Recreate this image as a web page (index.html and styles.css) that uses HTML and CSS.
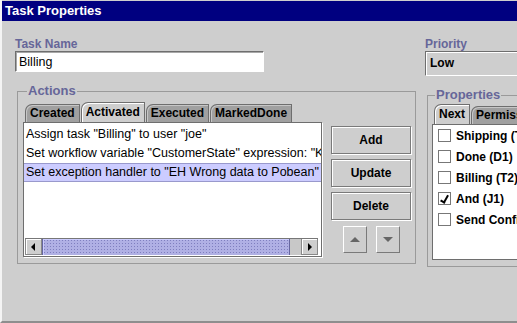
FILE: index.html
```html
<!DOCTYPE html>
<html>
<head>
  <meta name="viewport" content="width=device-width, initial-scale=1.0">
  <title>Task Properties</title>
  <link rel="stylesheet" href="styles.css">
</head>
<body>
  <div class="window">
    <div class="titlebar">Task Properties</div>
    <div class="content">
      <div class="left-column">
        <div class="field">
          <p class="label">Task Name</p>
          <input type="text" class="text-input" value="Billing">
        </div>
        <fieldset class="group actions-group">
          <legend>Actions</legend>
          <div class="actions-body">
            <div class="tab-panel">
              <div class="tabs">
                <div class="tab">Created</div>
                <div class="tab selected">Activated</div>
                <div class="tab">Executed</div>
                <div class="tab">MarkedDone</div>
              </div>
              <div class="list">
                <div class="rows">
                  <div class="row">Assign task "Billing" to user "joe"</div>
                  <div class="row">Set workflow variable "CustomerState" expression: "Known"</div>
                  <div class="row selected">Set exception handler to "EH Wrong data to Pobean"</div>
                </div>
                <div class="hscroll">
                  <div class="arrow-btn left"></div>
                  <div class="thumb"></div>
                  <div class="track"></div>
                  <div class="arrow-btn right"></div>
                </div>
              </div>
            </div>
            <div class="buttons">
              <button>Add</button>
              <button>Update</button>
              <button>Delete</button>
              <div class="move-buttons">
                <div class="move up"></div>
                <div class="move down"></div>
              </div>
            </div>
          </div>
        </fieldset>
      </div>

      <div class="right-column">
        <div class="field">
          <p class="label">Priority</p>
          <div class="combo">Low</div>
        </div>
        <fieldset class="group props-group">
          <legend>Properties</legend>
          <div class="tabs">
            <div class="tab selected">Next</div>
            <div class="tab">Permissions</div>
          </div>
          <div class="list check-list">
            <div class="check-row"><span class="box"></span>Shipping (T3)</div>
            <div class="check-row"><span class="box"></span>Done (D1)</div>
            <div class="check-row"><span class="box"></span>Billing (T2)</div>
            <div class="check-row"><span class="box checked"></span>And (J1)</div>
            <div class="check-row"><span class="box"></span>Send Confirmation (T4)</div>
          </div>
        </fieldset>
      </div>
    </div>
  </div>
</body>
</html>
```

FILE: styles.css
```css
html, body {
  height: 100%;
}

body {
  margin: 0;
  font-family: "Liberation Sans", Arial, sans-serif;
  background-color: #cecece;
  overflow: hidden;
}

.window {
  box-sizing: border-box;
  height: 323px;
  padding-top: 1px;
  border-left: 2px solid #f4f4f4;
  border-bottom: 2px solid #8e8e8e;
  background-color: #cecece;
  overflow: hidden;
}

.titlebar {
  height: 20px;
  line-height: 20px;
  padding-left: 3px;
  background-color: #000080;
  color: #fff;
  font-size: 13px;
  font-weight: bold;
}

.content {
  display: flex;
  padding-left: 13px;
}

.left-column {
  width: 401px;
  flex-shrink: 0;
}

.right-column {
  margin-left: 9px;
  width: 160px;
  flex-shrink: 0;
}

.field {
  margin-top: 17px;
}

.label {
  margin: 0;
  height: 13px;
  line-height: 13px;
  font-size: 12px;
  font-weight: bold;
  color: #666699;
}

.text-input {
  display: block;
  box-sizing: border-box;
  width: 249px;
  height: 21px;
  margin: 0;
  padding: 0 3px;
  font-family: "Liberation Sans", Arial, sans-serif;
  font-size: 12.5px;
  border: 1px solid #6e6e6e;
  border-right-color: #fff;
  border-bottom-color: #fff;
  box-shadow: inset 1px 1px 0 #a8a8a8;
  outline: none;
  background: #fff;
  color: #000;
}

.combo {
  box-sizing: border-box;
  width: 140px;
  height: 25px;
  line-height: 23px;
  padding-left: 4px;
  font-size: 12px;
  font-weight: bold;
  border: 1px solid #6e6e6e;
  border-bottom-color: #fff;
  box-shadow: inset 1px 1px 0 #fff;
}

.group {
  margin: 12px 0 0 2px;
  padding: 4px 6px 6px 6px;
  border: 1px solid #9a9a9a;
  min-width: 0;
}

.group legend {
  padding: 0 1px;
  margin-left: 3px;
  font-size: 13px;
  font-weight: bold;
  line-height: 14px;
  color: #666699;
}

.actions-body {
  display: flex;
}

.tab-panel {
  width: 299px;
  margin-left: -1px;
}

.tabs {
  display: flex;
  align-items: flex-end;
  height: 20px;
  padding-left: 2px;
}

.tab {
  box-sizing: border-box;
  height: 18px;
  line-height: 16px;
  padding: 0 4px;
  font-size: 12px;
  font-weight: bold;
  background-color: #a0a0a0;
  border: 1px solid #6e6e6e;
  border-bottom: none;
  border-top-left-radius: 7px;
  box-shadow: inset 1px 1px 0 #c6c6c6;
  margin-right: 1px;
}

.tab.selected {
  height: 20px;
  line-height: 19px;
  background-color: #cecece;
  box-shadow: inset 1px 1px 0 #fff;
}

.list {
  box-sizing: border-box;
  height: 135px;
  background-color: #fff;
  border: 1px solid #6e6e6e;
  box-shadow: 1px 1px 0 #fff;
  display: flex;
  flex-direction: column;
  overflow: hidden;
}

.rows {
  flex: 1;
  padding-top: 2px;
}

.row {
  height: 19px;
  line-height: 19px;
  padding-left: 2px;
  font-size: 12.5px;
  white-space: nowrap;
  overflow: hidden;
}

.row.selected {
  box-sizing: border-box;
  background-color: #ccccff;
  border-top: 1px solid #9999cc;
  border-bottom: 1px solid #9999cc;
  line-height: 17px;
}

.hscroll {
  display: flex;
  height: 16px;
  margin: 0 3px 1px 1px;
  border-top: 1px solid #777;
}

.arrow-btn {
  width: 15px;
  background-color: #cecece;
  border: 1px solid #888;
  border-top: none;
  box-shadow: inset 1px 1px 0 #fff;
  position: relative;
}

.arrow-btn::after {
  content: "";
  position: absolute;
  top: 4px;
  width: 0;
  height: 0;
  border-top: 4px solid transparent;
  border-bottom: 4px solid transparent;
}

.arrow-btn.left::after {
  left: 5px;
  border-right: 4px solid #000;
}

.arrow-btn.right::after {
  left: 6px;
  border-left: 4px solid #000;
}

.thumb {
  flex: 1;
  background-color: #b0b0e4;
  background-image: radial-gradient(circle, #7f7fbf 0.8px, transparent 1px);
  background-size: 3px 3px;
  border-left: 1px solid #6666a0;
  border-right: 1px solid #6666a0;
  box-shadow: inset 1px 1px 0 #ccccff;
}

.track {
  width: 11px;
  background-color: #c8c8c8;
}

.buttons {
  margin-left: 9px;
  padding-top: 24px;
  width: 80px;
  display: flex;
  flex-direction: column;
  gap: 5px;
}

.buttons button {
  box-sizing: border-box;
  width: 80px;
  height: 28px;
  margin: 0;
  font-family: "Liberation Sans", Arial, sans-serif;
  font-size: 12px;
  font-weight: bold;
  color: #000;
  background-color: #cecece;
  border: 1px solid #7a7a7a;
  box-shadow: inset 1px 1px 0 #fff, 1px 1px 0 #fff;
}

.move-buttons {
  display: flex;
  gap: 9px;
  padding-left: 12px;
  margin-top: 1px;
}

.move {
  box-sizing: border-box;
  width: 24px;
  height: 27px;
  border: 1px solid #fff;
  border-right-color: #7a7a7a;
  border-bottom-color: #7a7a7a;
  position: relative;
}

.move::after {
  content: "";
  position: absolute;
  left: 6px;
  top: 10px;
  border-left: 5px solid transparent;
  border-right: 5px solid transparent;
}

.move.up::after {
  border-bottom: 5px solid #666;
}

.move.down::after {
  border-top: 5px solid #666;
}

.props-group {
  margin-left: 2px;
  padding: 2px 4px 6px 4px;
}

.props-group .tabs {
  padding-left: 2px;
}

.check-list {
  height: 136px;
  padding-top: 0;
  box-shadow: inset 1px 1px 0 #fff;
}

.check-row {
  display: flex;
  align-items: center;
  height: 21px;
  padding-left: 5px;
  font-size: 12px;
  font-weight: bold;
  white-space: nowrap;
}

.box {
  flex-shrink: 0;
  box-sizing: border-box;
  width: 13px;
  height: 13px;
  margin-right: 5px;
  border: 1px solid #777;
  box-shadow: 1px 1px 0 #fff;
  background: #fff;
  position: relative;
}

.box.checked::after {
  content: "";
  position: absolute;
  left: 3px;
  top: 1px;
  width: 3px;
  height: 7px;
  border-right: 2px solid #000;
  border-bottom: 2px solid #000;
  transform: rotate(30deg);
}
```
